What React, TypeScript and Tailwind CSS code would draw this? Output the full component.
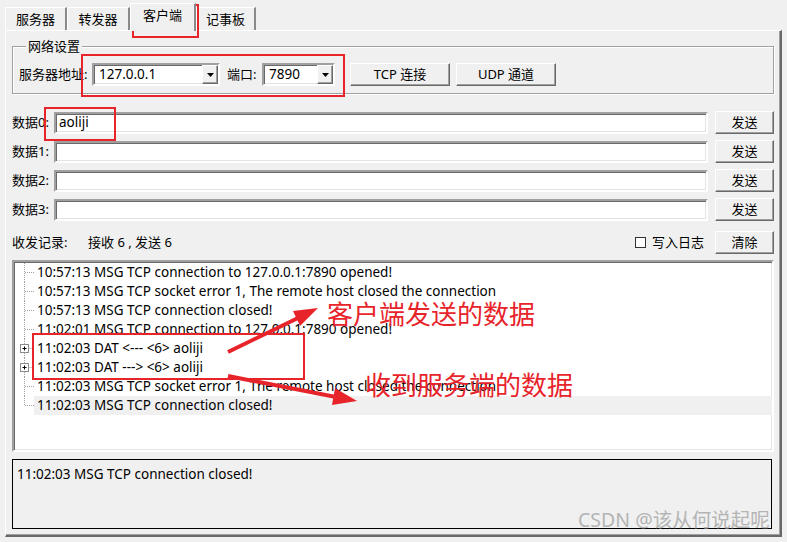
import React from "react";

const raised =
  "border border-t-white border-l-white border-r-[#696969] border-b-[#696969] shadow-[inset_-1px_-1px_0_#a0a0a0] bg-[#f0f0f0]";
const sunken =
  "border-2 border-t-[#a0a0a0] border-l-[#a0a0a0] border-r-white border-b-white shadow-[inset_1px_1px_0_#696969,inset_-1px_-1px_0_#e3e3e3] bg-white";

function Button({ className, children }: { className: string; children: React.ReactNode }) {
  return (
    <div className={`${raised} ${className} h-[23px] flex items-center justify-center text-[13px] text-black shrink-0`}>
      {children}
    </div>
  );
}

function Combo({ className, value }: { className: string; value: string }) {
  return (
    <div className={`${sunken} ${className} h-[23px] flex items-center shrink-0`}>
      <div className="flex-1 pl-[5px] text-[13.5px] leading-[19px] text-black">{value}</div>
      <div className={`${raised} w-[16px] h-[19px] flex items-center justify-center`}>
        <svg width="7" height="4" viewBox="0 0 7 4">
          <polygon points="0,0 7,0 3.5,4" fill="#000" />
        </svg>
      </div>
    </div>
  );
}

function Tab({ className, selected, children }: { className: string; selected?: boolean; children: React.ReactNode }) {
  return (
    <div
      className={`${className} ${
        selected ? "h-[28px] -mb-[1px] pb-[3px] z-10 relative" : "h-[23px] pt-[2px]"
      } border-t border-l border-t-white border-l-white border-r-2 border-r-[#8a8a8a] bg-[#f0f0f0] flex items-center justify-center text-[13px] text-black shrink-0`}
    >
      {children}
    </div>
  );
}

function DataRow({ label, value }: { label: string; value: string }) {
  return (
    <div className="flex items-center h-[23px]">
      <div className="w-[42px] text-[13px] text-black shrink-0">{label}</div>
      <div className={`${sunken} w-[654px] h-[22px] flex items-center pl-[3px] text-[13.5px] text-black shrink-0`}>{value}</div>
      <Button className="ml-[7px] w-[59px]">发送</Button>
    </div>
  );
}

type Row = { t: string; plus?: boolean; last?: boolean; sel?: boolean };
const rows: Row[] = [
  { t: "10:57:13 MSG TCP connection to 127.0.0.1:7890 opened!" },
  { t: "10:57:13 MSG TCP socket error 1, The remote host closed the connection" },
  { t: "10:57:13 MSG TCP connection closed!" },
  { t: "11:02:01 MSG TCP connection to 127.0.0.1:7890 opened!" },
  { t: "11:02:03 DAT <--- <6> aoliji", plus: true },
  { t: "11:02:03 DAT ---> <6> aoliji", plus: true },
  { t: "11:02:03 MSG TCP socket error 1, The remote host closed the connection" },
  { t: "11:02:03 MSG TCP connection closed!", last: true, sel: true },
];

function Connector({ plus, last }: { plus?: boolean; last?: boolean }) {
  return (
    <svg width="20" height="19" viewBox="0 0 20 19" className="shrink-0">
      <line x1="10.5" y1="0" x2="10.5" y2={last ? 9.5 : 19} stroke="#a0a0a0" strokeDasharray="1 1" />
      <line x1={plus ? 14.5 : 11} y1="9.5" x2="20" y2="9.5" stroke="#a0a0a0" strokeDasharray="1 1" />
      {plus && (
        <g>
          <rect x="6.5" y="5.5" width="8" height="8" fill="#fff" stroke="#8c8c8c" />
          <line x1="8.5" y1="9.5" x2="12.5" y2="9.5" stroke="#000" />
          <line x1="10.5" y1="7.5" x2="10.5" y2="11.5" stroke="#000" />
        </g>
      )}
    </svg>
  );
}

export default function App() {
  return (
    <div className="relative w-[787px] h-[542px] bg-[#f0f0f0] overflow-hidden font-['Noto_Sans','Noto_Sans_CJK_SC',sans-serif] text-black">
      {/* tabs */}
      <div className="flex items-end h-[30px] pl-[5px]">
        <Tab className="w-[62px]">服务器</Tab>
        <Tab className="w-[63px]">转发器</Tab>
        <Tab className="w-[66px]" selected>
          客户端
        </Tab>
        <Tab className="w-[60px]">记事板</Tab>
      </div>

      {/* tab page */}
      <div className="ml-[5px] w-[777px] border-t border-l border-t-white border-l-white border-r-2 border-b-2 border-r-[#696969] border-b-[#696969] shadow-[inset_-1px_-1px_0_#a0a0a0] px-[6px] pb-[6px]">
        <fieldset className="mt-[7px] border border-[#a0a0a0] shadow-[inset_1px_1px_0_#fff,1px_1px_0_#fff] pl-[6px] pt-[9px] pb-[7px]">
          <legend className="ml-[7px] px-[2px] text-[13px] leading-[16px] bg-[#f0f0f0] relative">网络设置</legend>
          <div className="flex items-center">
            <div className="w-[73px] text-[13px] shrink-0">服务器地址:</div>
            <Combo className="w-[128px]" value="127.0.0.1" />
            <div className="ml-[7px] w-[35px] text-[13px] shrink-0">端口:</div>
            <Combo className="w-[73px]" value="7890" />
            <Button className="ml-[15px] w-[100px]">TCP 连接</Button>
            <Button className="ml-[6px] w-[100px]">UDP 通道</Button>
          </div>
        </fieldset>

        <div className="mt-[17px] flex flex-col gap-[6px]">
          <DataRow label="数据0:" value="aoliji" />
          <DataRow label="数据1:" value="" />
          <DataRow label="数据2:" value="" />
          <DataRow label="数据3:" value="" />
        </div>

        <div className="mt-[10px] flex items-center h-[23px] text-[13px]">
          <div className="w-[76px] shrink-0">收发记录:</div>
          <div>接收 6 , 发送 6</div>
          <div className="flex-1" />
          <div className="w-[11px] h-[11px] border border-[#333] bg-white mr-[6px]" />
          <div>写入日志</div>
          <Button className="ml-[11px] w-[59px]">清除</Button>
        </div>

        <div className={`${sunken} mt-[6px] h-[192px] w-[762px] pt-[1px]`}>
          {rows.map((r, i) => (
            <div key={i} className="flex h-[19px]">
              <Connector plus={r.plus} last={r.last} />
              <div className={`flex-1 pl-[3px] text-[13.5px] leading-[19px] whitespace-nowrap ${r.sel ? "bg-[#f0f0f0]" : ""}`}>
                {r.t}
              </div>
            </div>
          ))}
        </div>

        <div className="mt-[7px] h-[70px] w-[760px] border border-black bg-[#f0f0f0] pl-[4px] pt-[5px] text-[13.5px] leading-[18px]">
          11:02:03 MSG TCP connection closed!
        </div>
      </div>

      {/* annotations overlay */}
      <div className="absolute inset-0 pointer-events-none">
        <div className="absolute left-[132px] top-[4px] w-[67px] h-[34px] border-2 border-[#e8242b]" />
        <div className="absolute left-[81px] top-[54px] w-[264px] h-[43px] border-2 border-[#e8242b]" />
        <div className="absolute left-[44px] top-[107px] w-[72px] h-[34px] border-2 border-[#e8242b]" />
        <div className="absolute left-[32px] top-[333px] w-[273px] h-[47px] border-2 border-[#e8242b]" />
        <svg className="absolute left-0 top-0" width="787" height="542" viewBox="0 0 787 542">
          <line x1="228" y1="352" x2="298" y2="318" stroke="#e8242b" strokeWidth="4" />
          <polygon points="318,308 300,326 293,311" fill="#e8242b" />
          <line x1="228" y1="376" x2="336" y2="397" stroke="#e8242b" strokeWidth="4" />
          <polygon points="357,401 332,405 335,388" fill="#e8242b" />
        </svg>
        <div className="absolute left-[327px] top-[299px] text-[26px] leading-[30px] text-[#e8242b] whitespace-nowrap">
          客户端发送的数据
        </div>
        <div className="absolute left-[365px] top-[370px] text-[26px] leading-[30px] text-[#e8242b] whitespace-nowrap">
          收到服务端的数据
        </div>
        <div className="absolute left-[578px] top-[508px] text-[19.5px] leading-[24px] text-[#b4b4b4] whitespace-nowrap">
          CSDN @该从何说起呢
        </div>
      </div>
    </div>
  );
}
